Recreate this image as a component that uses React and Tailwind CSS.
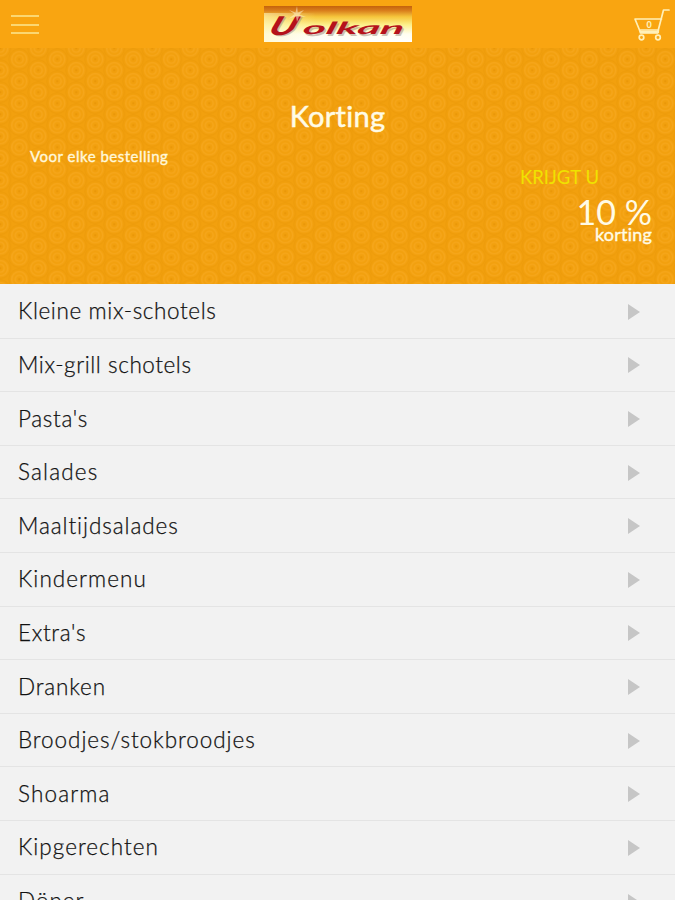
import { useState } from "react";

const categories = [
  { name: "Kleine mix-schotels", tracking: "tracking-[0.620px]" },
  { name: "Mix-grill schotels", tracking: "tracking-[0.580px]" },
  { name: "Pasta's", tracking: "tracking-[0.650px]" },
  { name: "Salades", tracking: "tracking-[1.150px]" },
  { name: "Maaltijdsalades", tracking: "tracking-[0.920px]" },
  { name: "Kindermenu", tracking: "tracking-[1.050px]" },
  { name: "Extra's", tracking: "tracking-[0.650px]" },
  { name: "Dranken", tracking: "tracking-[0.850px]" },
  { name: "Broodjes/stokbroodjes", tracking: "tracking-[0.930px]" },
  { name: "Shoarma", tracking: "tracking-[1.150px]" },
  { name: "Kipgerechten", tracking: "tracking-[1.030px]" },
  { name: "Döner", tracking: "tracking-[0.950px]" },
];

function LogoText() {
  return (
    <>
      <text x="0" y="0" transform="translate(3 28.500) skewX(-22)" fontSize="26" textLength="27" lengthAdjust="spacingAndGlyphs">U</text>
      <text x="0" y="0" transform="translate(38 28) skewX(-12)" fontSize="17" fontWeight="700" textLength="101" lengthAdjust="spacingAndGlyphs">olkan</text>
    </>
  );
}

function Logo() {
  return (
    <svg width="148" height="36" viewBox="0 0 148 36" role="img" aria-label="Volkan">
      <defs>
        <linearGradient id="logoBg" x1="0" y1="0" x2="0" y2="1">
          <stop offset="0" stopColor="#c4620c" />
          <stop offset="0.13" stopColor="#d97f1c" />
          <stop offset="0.3" stopColor="#f6c63c" />
          <stop offset="0.52" stopColor="#fdf08a" />
          <stop offset="0.78" stopColor="#fffef0" />
          <stop offset="1" stopColor="#ffffff" />
        </linearGradient>
        <linearGradient id="logoGlow" x1="0" y1="0" x2="1" y2="0">
          <stop offset="0" stopColor="#fff6c0" stopOpacity="0.6" />
          <stop offset="0.35" stopColor="#fff6c0" stopOpacity="0" />
        </linearGradient>
      </defs>
      <rect width="148" height="36" fill="url(#logoBg)" />
      <rect y="7" width="148" height="29" fill="url(#logoGlow)" />
      <g fontFamily="Lato, sans-serif" fontStyle="italic" fontWeight="900">
        <g fill="#9b8b80" opacity="0.5" transform="translate(1.500 1.500)" aria-hidden="true">
          <LogoText />
        </g>
        <g fill="#b5121b">
          <LogoText />
        </g>
      </g>
      <path d="M33 0l.8 6.500L40 4l-4.500 4.500L42 11l-7-.5L33 16l-1-5.500-7 2L30.500 8 25 4l6.500 2.500z" fill="#fff3cf" opacity="0.55" />
    </svg>
  );
}

function CartIcon({ count }) {
  return (
    <svg width="38" height="34" viewBox="0 0 38 34" fill="none" stroke="#fff0b8" strokeWidth="1.7" strokeLinecap="round" strokeLinejoin="round">
      <path d="M36 2h-5.500l-6 23H7.500M28.500 11H2l4.500 11h19M7.500 25l-1-3" />
      <path d="M8 24h17" strokeWidth="2.400" />
      <circle cx="8.500" cy="29.500" r="2.300" />
      <circle cx="25" cy="29.500" r="2.300" />
      <text x="16" y="19.500" textAnchor="middle" fontSize="9" fontWeight="900" fontFamily="Lato, sans-serif" fill="#fff0b8" stroke="none">
        {count}
      </text>
    </svg>
  );
}

function Header() {
  return (
    <header className="flex h-12 items-start justify-between bg-[#f9a511]">
      <button aria-label="Menu" className="mt-[15px] ml-[11px] flex w-[157px] flex-col gap-[6.500px]">
        <span className="h-[2px] w-7 bg-[#fbd771]" />
        <span className="h-[2px] w-7 bg-[#fbd771]" />
        <span className="h-[2px] w-7 bg-[#fbd771]" />
      </button>
      <div className="mt-1.5">
        <Logo />
      </div>
      <div className="mt-2 mr-[4px] flex w-[163px] justify-end">
        <CartIcon count={0} />
      </div>
    </header>
  );
}

function Pattern() {
  return (
    <svg className="absolute inset-0 h-full w-full" aria-hidden="true">
      <defs>
        <pattern id="rings" width="38" height="22" patternUnits="userSpaceOnUse" x="0.3" y="0.3">
          <g fill="none" stroke="#f7a81f" strokeWidth="1.200">
            {[[0, 0], [38, 0], [0, 22], [38, 22], [19, 11]].map(([x, y]) => (
              <g key={`${x}-${y}`}>
                <circle cx={x} cy={y} r="10.300" stroke="#ec9a09" strokeWidth="1" />
                <circle cx={x} cy={y} r="7.500" />
                <circle cx={x} cy={y} r="4" />
                <circle cx={x} cy={y} r="1" fill="#e79406" stroke="none" />
              </g>
            ))}
          </g>
        </pattern>
      </defs>
      <rect width="100%" height="100%" fill="url(#rings)" />
    </svg>
  );
}

function Discount() {
  return (
    <section className="relative h-[236px] overflow-hidden bg-[#f2a00e] text-[#fffbe6]">
      <Pattern />
      <div className="relative flex flex-col pt-[50px]">
        <h1 className="text-center text-[29px] leading-[36px] tracking-[0.250px] [-webkit-text-stroke:0.5px_#fffbe6]">Korting</h1>
        <p className="mt-[12px] ml-[30px] text-[15px] leading-5 tracking-[0.500px] [-webkit-text-stroke:0.4px_#fff3c4]">Voor elke bestelling</p>
        <div className="flex flex-col items-end pr-[23px]">
          <p className="mr-[53px] text-[18.500px] leading-[22px] text-[#f0e200]">KRIJGT U</p>
          <p className="mt-[10px] text-[34px] leading-[28px]">10 %</p>
          <p className="-mt-[3px] text-[18px] leading-[22px] tracking-[0.200px] [-webkit-text-stroke:0.4px_#fffbe6]">korting</p>
        </div>
      </div>
    </section>
  );
}

export default function App() {
  const [selected, setSelected] = useState(null);

  return (
    <div className="h-[900px] w-full overflow-hidden bg-[#f2f2f2] font-['Lato',sans-serif] [font-variant-ligatures:none]">
      <Header />
      <Discount />
      <ul className="pt-px">
        {categories.map((c) => (
          <li
            key={c.name}
            onClick={() => setSelected(c.name)}
            aria-current={selected === c.name}
            className="flex h-[53.620px] items-center justify-between border-b border-[#e4e4e4] pr-[35px] pl-[18px]"
          >
            <span className={`text-[22.500px] leading-7 font-light text-[#111] [-webkit-text-stroke:0.25px_#111] ${c.tracking}`}>{c.name}</span>
            <svg width="12" height="16" viewBox="0 0 12 16" className="mt-px">
              <path d="M0 0l12 8-12 8z" fill="#c6c6c6" />
            </svg>
          </li>
        ))}
      </ul>
    </div>
  );
}
